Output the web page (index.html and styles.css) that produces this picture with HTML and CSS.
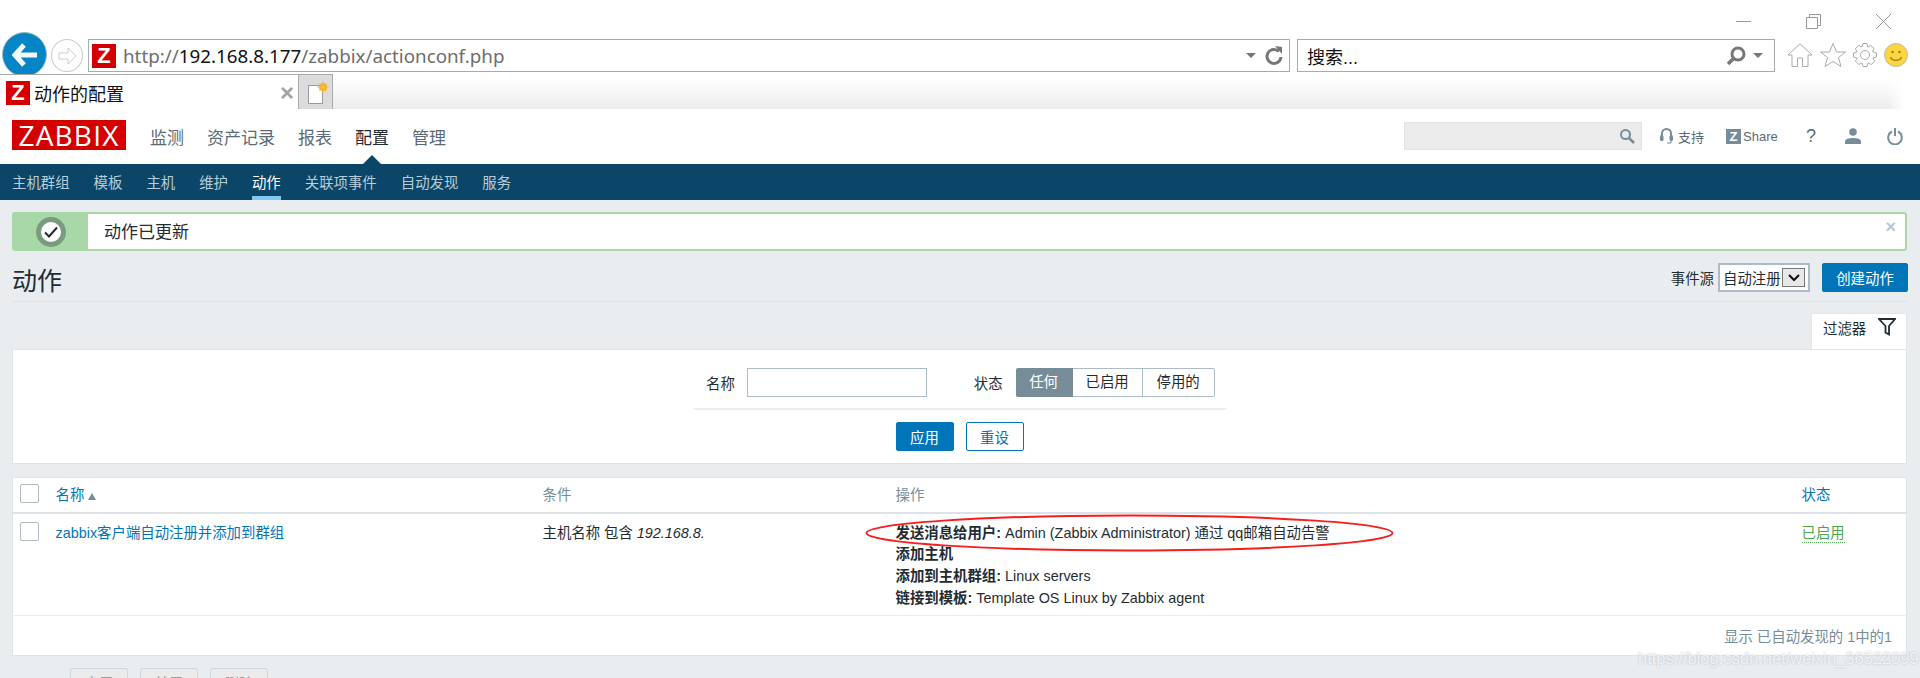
FILE: index.html
```html
<!DOCTYPE html>
<html lang="zh-CN">
<head>
  <meta charset="UTF-8">
  <title>动作的配置</title>
  <link rel="stylesheet" href="styles.css">
</head>
<body>

  <!-- BROWSER CHROME -->
  <div class="win-controls">
    <svg class="win-icon" width="15" height="15" viewBox="0 0 15 15"><path d="M0 7.5H15" stroke="#999" fill="none"/></svg>
    <svg class="win-icon" width="15" height="15" viewBox="0 0 15 15"><path d="M3.5 3.5V.5H14.5V11.5H11.5M.5 3.5H11.5V14.5H.5Z" stroke="#999" fill="none"/></svg>
    <svg class="win-icon" width="15" height="15" viewBox="0 0 15 15"><path d="M0 0L15 15M15 0L0 15" stroke="#999" fill="none"/></svg>
  </div>

  <div class="toolbar">
    <div class="back-btn">
      <svg width="26" height="24" viewBox="0 0 26 24"><path d="M12 2L3 12L12 22M3 12H25" stroke="#f2f8fc" stroke-width="5" fill="none"/></svg>
    </div>
    <div class="forward-btn">
      <svg width="20" height="18" viewBox="0 0 20 18"><path d="M11 1L19 9L11 17V12H2V6H11Z" stroke="#ccc" fill="none"/></svg>
    </div>
    <div class="address-bar">
      <span class="favicon">Z</span>
      <span class="url">http://<b>192.168.8.177</b>/zabbix/actionconf.php</span>
      <span class="caret"></span>
      <svg class="refresh" width="18" height="20" viewBox="0 0 18 20"><path d="M14 5.5A7 7 0 1 0 16 11" stroke="#777" stroke-width="3" fill="none"/><path d="M10 0L17 1V8Z" fill="#777"/></svg>
    </div>
    <div class="search-bar">
      <span class="search-hint">搜索...</span>
      <svg width="20" height="20" viewBox="0 0 20 20"><circle cx="12" cy="8" r="6" stroke="#777" stroke-width="3" fill="none"/><path d="M8 12L2 18" stroke="#777" stroke-width="3.5"/></svg>
      <span class="caret"></span>
    </div>
    <div class="tool-icons">
      <svg width="26" height="24" viewBox="0 0 26 24"><path d="M1 12L13 .8L25 12H21V23.5H15.5V15H10.500V23.5H5V12Z" stroke="#aaa" fill="#fff"/></svg>
      <svg width="26" height="24" viewBox="0 0 26 24"><path d="M13 .5L16.500 9H25.500L18.500 14.500L21 23.500L13 18.500L5 23.500L7.500 14.500L.5 9H9.500Z" stroke="#aaa" fill="#fff"/></svg>
      <svg width="24" height="24" viewBox="0 0 24 24"><path d="M10 .5H14L14.800 4L17.800 2.400L21 5.500L19.500 8.500L23.500 10V14L20 15L21.500 18.300L18.300 21.500L15 20L14 23.500H10L9 20L5.700 21.500L2.500 18.300L4 15L.5 14V10L4 9L2.500 5.700L5.700 2.500L9 4Z" stroke="#aaa" fill="#fff"/><circle cx="12" cy="12" r="4.500" stroke="#aaa" fill="none"/></svg>
      <svg width="24" height="24" viewBox="0 0 24 24"><circle cx="12" cy="12" r="11.500" fill="#fcd53f" stroke="#bbb" stroke-width="1"/><circle cx="8.500" cy="9" r="1.200" fill="#9a7b1c"/><circle cx="15.500" cy="9" r="1.200" fill="#9a7b1c"/><path d="M6.500 14C8 18.500 16 18.500 17.500 14" stroke="#9a7b1c" stroke-width="1.200" fill="none"/></svg>
    </div>
  </div>

  <div class="tab-strip">
    <div class="tab">
      <span class="favicon">Z</span>
      <span class="tab-title">动作的配置</span>
      <span class="tab-close">×</span>
    </div>
    <div class="new-tab">
      <svg width="22" height="24" viewBox="0 0 22 24"><path d="M1.500 4.500H15.500V22.500H1.500Z" stroke="#999" fill="#fff"/><circle cx="16" cy="6" r="4" fill="#f6a81c"/><path d="M16 0V12M10 6H22M12 2L20 10M20 2L12 10" stroke="#f6c04c"/></svg>
    </div>
    <div class="tab-fill"></div>
  </div>

  <!-- ZABBIX HEADER -->
  <header class="top-nav">
    <div class="logo">ZABBIX</div>
    <nav class="main-menu">
      <a href="#">监测</a>
      <a href="#">资产记录</a>
      <a href="#">报表</a>
      <a href="#" class="selected">配置</a>
      <a href="#">管理</a>
    </nav>
    <div class="top-search">
      <svg width="16" height="16" viewBox="0 0 16 16"><circle cx="6.500" cy="6.500" r="4.500" stroke="#768d99" stroke-width="2" fill="none"/><path d="M10 10L15 15" stroke="#768d99" stroke-width="2.500"/></svg>
    </div>
    <div class="top-links">
      <a href="#" class="link-support">
        <svg width="13" height="18" viewBox="0 0 13 18"><path d="M2 9V6.500A4.500 4.500 0 0 1 11 6.500V9" stroke="#768d99" stroke-width="2" fill="none"/><rect x="0" y="8" width="3.500" height="6" rx="1.500" fill="#768d99"/><rect x="9.500" y="8" width="3.500" height="6" rx="1.500" fill="#768d99"/><path d="M11 13V16H7" stroke="#768d99" fill="none"/></svg>
        支持
      </a>
      <a href="#" class="link-share"><span class="share-z">Z</span>Share</a>
      <a href="#" class="link-help">?</a>
      <a href="#" class="link-user">
        <svg width="16" height="16" viewBox="0 0 16 16"><circle cx="8" cy="4" r="3.800" fill="#768d99"/><path d="M0 16V13.500C0 11 4 10 8 10S16 11 16 13.500V16Z" fill="#768d99"/></svg>
      </a>
      <a href="#" class="link-power">
        <svg width="16" height="17" viewBox="0 0 16 17"><path d="M5 3.500A6.800 6.800 0 1 0 11 3.500M8 0V8" stroke="#768d99" stroke-width="2" fill="none"/></svg>
      </a>
    </div>
  </header>

  <nav class="sub-menu">
    <a href="#">主机群组</a>
    <a href="#">模板</a>
    <a href="#">主机</a>
    <a href="#">维护</a>
    <a href="#" class="selected">动作</a>
    <a href="#">关联项事件</a>
    <a href="#">自动发现</a>
    <a href="#">服务</a>
  </nav>

  <main class="content">
    <!-- MESSAGE -->
    <div class="msg-good">
      <div class="msg-icon">
        <svg width="30" height="30" viewBox="0 0 30 30"><circle cx="15" cy="15" r="12.500" fill="#fff" stroke="#7a9c7e" stroke-width="5"/><path d="M9 15.500L13 19.500L21 10.500" stroke="#1f2c33" stroke-width="2" fill="none"/></svg>
      </div>
      <div class="msg-text">动作已更新</div>
      <span class="msg-close">×</span>
    </div>

    <!-- TITLE -->
    <div class="page-head">
      <h1>动作</h1>
      <div class="head-controls">
        <label>事件源</label>
        <div class="fake-select">
          <span>自动注册</span>
          <span class="select-btn">
            <svg width="12" height="8" viewBox="0 0 12 8"><path d="M1 1L6 6L11 1" stroke="#111" stroke-width="2" fill="none"/></svg>
          </span>
        </div>
        <button class="btn-main btn-create">创建动作</button>
      </div>
    </div>

    <!-- FILTER -->
    <div class="filter-tabs">
      <div class="filter-tab">
        <span>过滤器</span>
        <svg width="18" height="18" viewBox="0 0 18 18"><path d="M1 1H17L11 8V16.500L7.500 14.500V8Z" stroke="#1f2c33" stroke-width="1.800" fill="none"/></svg>
      </div>
    </div>
    <div class="filter-box">
      <div class="filter-row">
        <label>名称</label>
        <input class="filter-input" type="text">
        <label class="status-label">状态</label>
        <div class="radio-group">
          <span class="radio active">任何</span>
          <span class="radio">已启用</span>
          <span class="radio">停用的</span>
        </div>
      </div>
      <div class="filter-actions">
        <button class="btn-main">应用</button>
        <button class="btn-alt">重设</button>
      </div>
    </div>

    <!-- TABLE -->
    <table class="list-table">
      <colgroup>
        <col class="col-check"><col class="col-name"><col class="col-cond"><col class="col-ops"><col>
      </colgroup>
      <thead>
        <tr>
          <th><span class="checkbox"></span></th>
          <th><a href="#">名称</a><span class="sort-arrow"></span></th>
          <th class="muted">条件</th>
          <th class="muted">操作</th>
          <th><a href="#">状态</a></th>
        </tr>
      </thead>
      <tbody>
        <tr>
          <td><span class="checkbox"></span></td>
          <td><a href="#">zabbix客户端自动注册并添加到群组</a></td>
          <td>主机名称 包含 <i>192.168.8.</i></td>
          <td class="ops">
            <b>发送消息给用户:</b> Admin (Zabbix Administrator) 通过 qq邮箱自动告警<br>
            <b>添加主机</b><br>
            <b>添加到主机群组:</b> Linux servers<br>
            <b>链接到模板:</b> Template OS Linux by Zabbix agent
            <svg class="red-ring" width="529" height="39" viewBox="0 0 529 39"><ellipse cx="264.500" cy="19" rx="263" ry="17.500" stroke="#f61e1e" stroke-width="2" fill="none"/></svg>
          </td>
          <td><a href="#" class="status-on">已启用</a></td>
        </tr>
      </tbody>
    </table>
    <div class="table-stats">显示 已自动发现的 1中的1</div>

    <!-- BOTTOM ACTIONS -->
    <div class="action-bar">
      <span class="selected-count">选择</span>
      <button class="btn-off">启用</button>
      <button class="btn-off">禁用</button>
      <button class="btn-off">删除</button>
    </div>
  </main>

  <div class="watermark">https://blog.csdn.net/weixin_36522099</div>

</body>
</html>
```

FILE: styles.css
```css
* {
  box-sizing: border-box;
}

html, body {
  height: 678px;
  overflow: hidden;
}

body {
  margin: 0;
  position: relative;
  background: #fff;
  font-family: "Liberation Sans", "Noto Sans CJK SC", sans-serif;
  font-size: 14.4px;
  color: #1f2c33;
}

a {
  color: inherit;
  text-decoration: none;
}

/* browser chrome */
.win-controls {
  height: 39px;
  display: flex;
  justify-content: flex-end;
  padding: 14px 29px 0 0;
  gap: 55px;
}

.toolbar {
  height: 35px;
  display: flex;
  align-items: flex-start;
}

.back-btn {
  width: 45px;
  height: 45px;
  margin: -7px 0 0 2px;
  border-radius: 50%;
  background: #0685c6;
  border: 1px solid #9bb;
  display: flex;
  align-items: center;
  justify-content: center;
  flex: none;
}

.forward-btn {
  width: 32px;
  height: 33px;
  margin-left: 4px;
  border-radius: 50%;
  border: 1px solid #ccc;
  display: flex;
  align-items: center;
  justify-content: center;
  flex: none;
}

.address-bar {
  width: 1202px;
  height: 33px;
  margin-left: 5px;
  border: 1px solid #aaa;
  display: flex;
  align-items: center;
  padding: 0 6px 0 3px;
  flex: none;
}

.favicon {
  width: 24px;
  height: 24px;
  background: #d40000;
  color: #fff;
  font-size: 22px;
  font-weight: bold;
  line-height: 24px;
  text-align: center;
  flex: none;
}

.url {
  margin-left: 7px;
  font-family: "Noto Sans", sans-serif;
  font-size: 18.800px;
  color: #6d6d6d;
  flex: 1;
}

.url b {
  font-weight: normal;
  color: #111;
}

.caret {
  width: 0;
  height: 0;
  border-left: 5px solid transparent;
  border-right: 5px solid transparent;
  border-top: 5px solid #777;
  flex: none;
}

.refresh {
  margin-left: 9px;
}

.search-bar {
  width: 478px;
  height: 33px;
  margin-left: 7px;
  border: 1px solid #aaa;
  display: flex;
  align-items: center;
  padding: 0 11px 0 9px;
  gap: 7px;
  flex: none;
}

.search-hint {
  flex: 1;
  font-size: 18px;
  color: #111;
}

.tool-icons {
  display: flex;
  margin: 4px 0 0 12px;
  gap: 7px;
  align-items: center;
}

.tab-strip {
  height: 35px;
  display: flex;
  position: relative;
}

.tab {
  width: 299px;
  background: #fff;
  border: 1px solid #aaa;
  border-bottom: none;
  border-left: none;
  display: flex;
  align-items: center;
  padding: 2px 6px 0;
}

.tab-title {
  margin-left: 4px;
  font-size: 18px;
  color: #111;
  flex: 1;
}

.tab-close {
  font-size: 24px;
  line-height: 1;
  font-weight: bold;
  color: #a4a4a4;
  margin-right: -2px;
}

.new-tab {
  width: 34px;
  background: #dcdcdc;
  border: 1px solid #aaa;
  border-left: none;
  border-bottom: none;
  padding: 6px 0 0 8px;
}

.tab-fill {
  width: 1571px;
  background: linear-gradient(to bottom, #fff 15%, #ececec 100%);
  mask-image: linear-gradient(to left, transparent, #000 16px);
  -webkit-mask-image: linear-gradient(to left, transparent, #000 16px);
}

/* zabbix header */
.top-nav {
  height: 55px;
  display: flex;
  align-items: center;
  padding-left: 12px;
}

.logo {
  width: 114px;
  height: 30px;
  background: #d40000;
  color: #fff;
  font-family: "Open Sans", sans-serif;
  font-size: 28px;
  letter-spacing: 1.200px;
  line-height: 30px;
  text-align: center;
  margin-top: -4px;
  flex: none;
}

.main-menu {
  display: flex;
  gap: 23px;
  margin-left: 24px;
  font-size: 17px;
  color: #5a6b75;
  flex: 1;
}

.main-menu a.selected {
  color: #1f2c33;
  position: relative;
}

.main-menu a.selected::after {
  content: "";
  position: absolute;
  left: 50%;
  top: 31px;
  margin-left: -10px;
  border-left: 10px solid transparent;
  border-right: 10px solid transparent;
  border-bottom: 10px solid #0b4669;
}

.top-search {
  width: 238px;
  height: 28px;
  background: #ebebeb;
  border: 1px solid #e3e3e3;
  margin-top: -2px;
  display: flex;
  align-items: center;
  justify-content: flex-end;
  padding-right: 6px;
}

.top-links {
  width: 278px;
  display: flex;
  align-items: center;
  margin-top: -1px;
  font-size: 13px;
  color: #5a6b75;
  padding-left: 18px;
}

.link-support {
  display: flex;
  align-items: center;
  gap: 5px;
  width: 66px;
}

.link-share {
  display: flex;
  align-items: center;
  gap: 2px;
  width: 80px;
}

.share-z {
  width: 15px;
  height: 15px;
  background: #768d99;
  color: #fff;
  font-size: 13px;
  font-weight: bold;
  line-height: 15px;
  text-align: center;
}

.link-help {
  width: 39px;
  font-size: 18px;
  color: #5a6b75;
}

.link-user {
  width: 42px;
  display: flex;
}

.link-power {
  display: flex;
}

.sub-menu {
  height: 36px;
  background: #0b4669;
  display: flex;
  gap: 24px;
  padding-left: 12px;
  font-size: 14.400px;
  color: #b8cdd9;
}

.sub-menu a {
  line-height: 38px;
  height: 36px;
}

.sub-menu a.selected {
  color: #fff;
  border-bottom: 4px solid #82c8f5;
}

/* page content */
.content {
  height: 478px;
  background: #e9edf0;
  padding: 12px 13px 0 12px;
}

.msg-good {
  height: 39px;
  border: 2px solid #a8d8a8;
  border-radius: 3px;
  background: #fff;
  display: flex;
  align-items: center;
  position: relative;
}

.msg-icon {
  width: 74px;
  height: 100%;
  background: #a8d8a8;
  display: flex;
  align-items: center;
  justify-content: center;
}

.msg-text {
  margin: -2px 0 0 16px;
  font-size: 17px;
}

.msg-close {
  position: absolute;
  right: 9px;
  top: 2px;
  font-size: 18px;
  line-height: 22px;
  font-weight: bold;
  color: #bcc6cc;
}

.page-head {
  height: 51px;
  display: flex;
  align-items: flex-start;
  justify-content: space-between;
  border-bottom: 1px solid #dfe3e6;
}

h1 {
  margin: 12px 0 0;
  font-size: 25px;
  font-weight: normal;
  line-height: 36px;
}

.head-controls {
  display: flex;
  align-items: center;
  margin: 12px -1px 0 0;
}

.head-controls label {
  margin-right: 4px;
  font-size: 14.400px;
}

.fake-select {
  width: 92px;
  height: 29px;
  border: 2px solid #acbbc7;
  background: #fff;
  display: flex;
  align-items: center;
  justify-content: space-between;
  padding: 0 3px;
  font-size: 14.400px;
  margin-right: 12px;
}

.select-btn {
  width: 23px;
  height: 19px;
  background: #e8e8e8;
  border: 1px solid #777;
  display: flex;
  align-items: center;
  justify-content: center;
}

.btn-main, .btn-alt, .btn-off {
  height: 29px;
  width: 58px;
  border-radius: 2px;
  font-family: inherit;
  font-size: 14.400px;
  padding: 0;
}

.btn-main {
  background: #0275b8;
  border: 1px solid #0275b8;
  color: #fff;
}

.btn-create {
  width: 86px;
}

.filter-tabs {
  height: 47px;
  padding-top: 11px;
  display: flex;
  justify-content: flex-end;
}

.filter-tab {
  width: 96px;
  background: #fff;
  border: 1px solid #e3e7ea;
  border-bottom: none;
  display: flex;
  padding: 4px 0 0 11px;
  gap: 12px;
  align-items: flex-start;
}

.filter-tab span {
  line-height: 22px;
}

.filter-box {
  height: 115px;
  background: #fff;
  border: 1px solid #dfe4e7;
  padding-top: 18px;
}

.filter-row {
  width: 532px;
  height: 42px;
  margin-left: 681px;
  padding: 0 0 12px 12px;
  display: flex;
  align-items: center;
  border-bottom: 2px solid #ebeef0;
}

.filter-input {
  width: 180px;
  height: 29px;
  margin: 0 0 0 12px;
  border: 1px solid #acbbc7;
  background: #fff;
  padding: 0;
  flex: none;
}

.status-label {
  margin-left: 47px;
}

.radio-group {
  display: flex;
  margin-left: 13px;
  height: 29px;
}

.radio {
  width: 70px;
  line-height: 27px;
  text-align: center;
  border: 1px solid #acbbc7;
  border-left: none;
}

.radio.active {
  width: 57px;
  background: #768d99;
  border-color: #768d99;
  color: #fff;
  border-radius: 2px 0 0 2px;
}

.radio:last-child {
  width: 72px;
  border-radius: 0 2px 2px 0;
}

.filter-actions {
  display: flex;
  justify-content: center;
  gap: 12px;
  margin-top: 12px;
}

.btn-alt {
  background: #fff;
  border: 1px solid #0275b8;
  color: #0275b8;
}

.list-table {
  width: 1895px;
  margin-top: 13px;
  table-layout: fixed;
  border-collapse: collapse;
  background: #fff;
  border-left: 1px solid #dfe4e7;
  border-right: 1px solid #dfe4e7;
  border-top: 1px solid #dfe4e7;
}

.col-check {
  width: 43px;
}

.col-name {
  width: 487px;
}

.col-cond {
  width: 353px;
}

.col-ops {
  width: 906px;
}

th, td {
  text-align: left;
  vertical-align: top;
  padding: 0;
  font-weight: normal;
}

thead tr {
  height: 35px;
  border-bottom: 2px solid #dde2e6;
}

th {
  padding-top: 7px;
  line-height: 20px;
}

th a, td a {
  color: #0275b8;
}

th.muted {
  color: #768d99;
}

.sort-arrow {
  display: inline-block;
  margin-left: 4px;
  border-left: 4.500px solid transparent;
  border-right: 4.500px solid transparent;
  border-bottom: 7px solid #768d99;
}

tbody tr {
  height: 103px;
  border-bottom: 1px solid #ebeef0;
}

td {
  padding-top: 9px;
  line-height: 21.800px;
}

.checkbox {
  display: block;
  width: 19px;
  height: 19px;
  margin: -1px 0 0 7px;
  border: 1px solid #acbbc7;
  border-radius: 2px;
  background: #fff;
}

td .checkbox {
  margin-top: -1px;
}

.ops {
  position: relative;
}

.red-ring {
  position: absolute;
  left: -31px;
  top: 0;
}

td a.status-on {
  color: #4da64d;
  border-bottom: 1px dotted #4da64d;
  padding-bottom: 1px;
}

.table-stats {
  width: 1895px;
  height: 40px;
  background: #fff;
  border: 1px solid #dfe4e7;
  border-top: none;
  text-align: right;
  padding-right: 14px;
  line-height: 43px;
  color: #768d99;
}

.action-bar {
  display: flex;
  align-items: flex-start;
  margin-top: 12px;
  gap: 12px;
  padding-left: 12px;
}

.selected-count {
  width: 34px;
  margin-top: 6px;
  color: #768d99;
}

.btn-off {
  background: #ebebeb;
  border: 1px solid #cfd8dd;
  color: #999;
}

.watermark {
  position: absolute;
  left: 1638px;
  top: 649px;
  font-size: 16.500px;
  color: rgba(255, 255, 255, 0.75);
  text-shadow: 0 0 2px rgba(150, 160, 170, 0.7);
}
```
